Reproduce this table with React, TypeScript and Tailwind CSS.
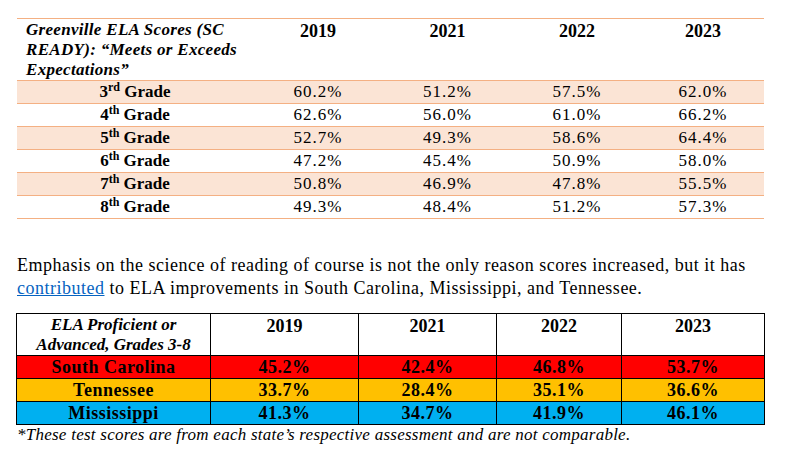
const greenville = [
  { n: "3", sup: "rd", v: ["60.2%", "51.2%", "57.5%", "62.0%"], shade: true },
  { n: "4", sup: "th", v: ["62.6%", "56.0%", "61.0%", "66.2%"], shade: false },
  { n: "5", sup: "th", v: ["52.7%", "49.3%", "58.6%", "64.4%"], shade: true },
  { n: "6", sup: "th", v: ["47.2%", "45.4%", "50.9%", "58.0%"], shade: false },
  { n: "7", sup: "th", v: ["50.8%", "46.9%", "47.8%", "55.5%"], shade: true },
  { n: "8", sup: "th", v: ["49.3%", "48.4%", "51.2%", "57.3%"], shade: false },
]

const states = [
  { name: "South Carolina", v: ["45.2%", "42.4%", "46.8%", "53.7%"], bg: "bg-[#ff0000]" },
  { name: "Tennessee", v: ["33.7%", "28.4%", "35.1%", "36.6%"], bg: "bg-[#ffc000]" },
  { name: "Mississippi", v: ["41.3%", "34.7%", "41.9%", "46.1%"], bg: "bg-[#00b0f0]" },
]

const years = ["2019", "2021", "2022", "2023"]

export default function App() {
  return (
    <div className="w-[788px] h-[457px] bg-white text-black font-['Liberation_Serif',serif] pt-[18px] pl-[17px] overflow-hidden">
      <table className="w-[747px] table-fixed border-collapse">
        <colgroup>
          <col className="w-[236px]" />
          <col className="w-[130px]" />
          <col className="w-[129px]" />
          <col className="w-[130px]" />
          <col className="w-[122px]" />
        </colgroup>
        <thead>
          <tr className="h-[61px] border-t border-b border-[#f4b083] align-top">
            <th className="text-left font-bold italic text-[17px] tracking-[0.3px] leading-[20px] pl-[9px] pr-0 pt-[1px]">
              Greenville ELA Scores (SC READY): “Meets or Exceeds Expectations”
            </th>
            {years.map((y) => (
              <th key={y} className="font-bold text-[18px] leading-[20px] pt-[2px]">
                {y}
              </th>
            ))}
          </tr>
        </thead>
        <tbody>
          {greenville.map((r) => (
            <tr
              key={r.n}
              className={`h-[23px] border-b border-[#f4b083] ${r.shade ? "bg-[#fbe4d5]" : ""}`}
            >
              <td className="text-center font-bold text-[17px] leading-[22px]">
                {r.n}
                <sup className="text-[12px]">{r.sup}</sup> Grade
              </td>
              {r.v.map((v, i) => (
                <td key={i} className="text-center text-[17px] tracking-[1px] leading-[22px]">
                  {v}
                </td>
              ))}
            </tr>
          ))}
        </tbody>
      </table>

      <p className="mt-[35px] text-[18px] tracking-[0.5px] leading-[23px] w-[750px]">
        Emphasis on the science of reading of course is not the only reason scores increased, but it has{" "}
        <a className="text-[#0563c1] underline">contributed</a> to ELA improvements in South Carolina,
        Mississippi, and Tennessee.
      </p>

      <table className="mt-[13px] -ml-[1px] w-[748px] table-fixed border-collapse">
        <colgroup>
          <col className="w-[194px]" />
          <col className="w-[148px]" />
          <col className="w-[138px]" />
          <col className="w-[125px]" />
          <col className="w-[143px]" />
        </colgroup>
        <thead>
          <tr className="h-[41px] align-top">
            <th className="border border-black font-bold italic text-[17px] leading-[20px] px-1 pt-[1px]">
              ELA Proficient or Advanced, Grades 3-8
            </th>
            {years.map((y) => (
              <th key={y} className="border border-black font-bold text-[18px] leading-[20px] pt-[2px]">
                {y}
              </th>
            ))}
          </tr>
        </thead>
        <tbody>
          {states.map((s) => (
            <tr key={s.name} className={`h-[23px] ${s.bg}`}>
              <td className="border border-black text-center font-bold text-[18px] tracking-[0.5px] leading-[21px]">
                {s.name}
              </td>
              {s.v.map((v, i) => (
                <td key={i} className="border border-black text-center font-bold text-[18px] tracking-[0.5px] leading-[21px]">
                  {v}
                </td>
              ))}
            </tr>
          ))}
        </tbody>
      </table>
      <p className="italic text-[17px] tracking-[0.25px] leading-[19px]">
        *These test scores are from each state’s respective assessment and are not comparable.
      </p>
    </div>
  )
}
